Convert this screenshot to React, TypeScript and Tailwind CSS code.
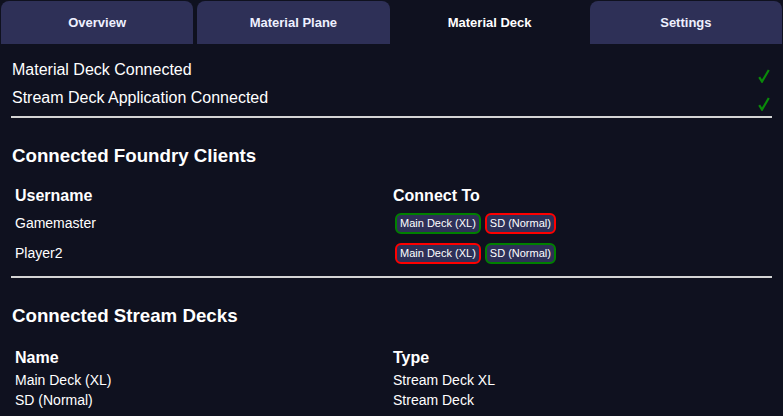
const tabs = [
  { name: "Overview", active: false },
  { name: "Material Plane", active: false },
  { name: "Material Deck", active: true },
  { name: "Settings", active: false },
];

const status = ["Material Deck Connected", "Stream Deck Application Connected"];

const clients = [
  { user: "Gamemaster", xl: true },
  { user: "Player2", xl: false },
];

const decks = [
  { name: "Main Deck (XL)", type: "Stream Deck XL" },
  { name: "SD (Normal)", type: "Stream Deck" },
];

function Badge({ label, on }: { label: string; on: boolean }) {
  return (
    <span
      className={`h-[21px] px-[3px] flex items-center rounded-md border-2 bg-[#2e3057] text-[11px] text-white ${
        on ? "border-[#008000]" : "border-[#ff0000]"
      }`}
    >
      {label}
    </span>
  );
}

function Check() {
  return (
    <svg width="12" height="14" viewBox="0 0 12 14" className="mt-[12px]">
      <path d="M1.2 8.2 L4 12.6 L10.8 1" fill="none" stroke="#0a8a0a" strokeWidth="2.2" />
    </svg>
  );
}

export default function App() {
  return (
    <div className="w-[783px] h-[416px] overflow-hidden bg-[#0f111f] text-white font-['Liberation_Sans',Arial,sans-serif]">
      {/* Tabs */}
      <div className="flex gap-1 px-[1px] pt-[1px] h-[44px]">
        {tabs.map((t) => (
          <div
            key={t.name}
            className={`flex-1 rounded-t-lg flex items-center justify-center text-[13px] font-bold ${
              t.active ? "text-white" : "bg-[#2e3057] text-[#eef0ff]"
            }`}
          >
            {t.name}
          </div>
        ))}
      </div>

      <div className="px-[11px] pt-[12px]">
        {/* Status */}
        {status.map((s) => (
          <div key={s} className="h-[28px] flex items-center justify-between pl-[1px] pr-[2px] text-[16px]">
            <span>{s}</span>
            <Check />
          </div>
        ))}
        <div className="mt-[4px] h-[2px] bg-[#d4d4d4]" />

        {/* Foundry clients */}
        <h3 className="mt-[27px] h-[22px] leading-[22px] text-[18.72px] font-bold pl-[1px]">Connected Foundry Clients</h3>
        <div className="mt-[19px] pl-[4px] grid grid-cols-[378px_1fr]">
          <div className="h-[20px] leading-[20px] text-[16px] font-bold">Username</div>
          <div className="h-[20px] leading-[20px] text-[16px] font-bold">Connect To</div>
          <div className="col-span-2 h-[2px]" />
          {clients.map((c) => (
            <div key={c.user} className="contents">
              <div className="h-[30px] flex items-center text-[14px]">{c.user}</div>
              <div className="h-[30px] flex items-center gap-1 pl-[2px]">
                <Badge label="Main Deck (XL)" on={c.xl} />
                <Badge label="SD (Normal)" on={!c.xl} />
              </div>
            </div>
          ))}
        </div>
        <div className="mt-[8px] h-[2px] bg-[#d4d4d4]" />

        {/* Stream decks */}
        <h3 className="mt-[27px] h-[22px] leading-[22px] text-[18.72px] font-bold pl-[1px]">Connected Stream Decks</h3>
        <div className="mt-[21px] pl-[4px] grid grid-cols-[378px_1fr]">
          <div className="h-[20px] leading-[20px] text-[16px] font-bold">Name</div>
          <div className="h-[20px] leading-[20px] text-[16px] font-bold">Type</div>
          <div className="col-span-2 h-[2px]" />
          {decks.map((d) => (
            <div key={d.name} className="contents">
              <div className="h-[20px] leading-[20px] text-[14px]">{d.name}</div>
              <div className="h-[20px] leading-[20px] text-[14px]">{d.type}</div>
            </div>
          ))}
        </div>
      </div>
    </div>
  );
}
